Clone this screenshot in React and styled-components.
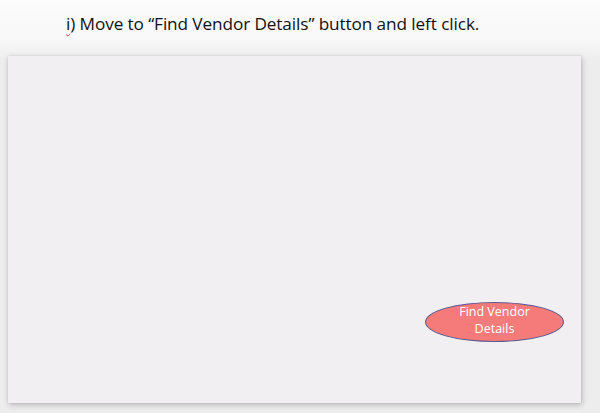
import styled, { createGlobalStyle } from "styled-components";

const Global = createGlobalStyle`
    html, body {
        margin: 0;
        padding: 0;
        background: #f6f5f6;
    }
    body {
        font-family: "Open Sans", "Liberation Sans", sans-serif;
        width: 600px;
        height: 413px;
        overflow: hidden;
    }
`;

const Page = styled.div`
    display: flex;
    flex-direction: column;
    padding: 11px 0 0 8px;
    background: linear-gradient(#fcfcfc 0px, #f8f8f8 40px, #ededed 60px, #ededed);
    height: 413px;
    box-sizing: border-box;
`;

const Title = styled.p`
    margin: 0 0 20px 58px;
    font-size: 17.2px;
    color: #111;
    line-height: 25px;
    letter-spacing: -0.1px;
`;

const Squiggle = styled.span`
    text-decoration: underline wavy #d33;
    text-decoration-thickness: 1px;
    text-underline-offset: 2px;
`;

const Slide = styled.div`
    width: 573px;
    height: 347px;
    background: #f1eff1;
    box-shadow: 1px 2px 6px rgba(0, 0, 0, 0.22), 0 0 2px rgba(0, 0, 0, 0.1);
    display: flex;
    align-items: flex-end;
    justify-content: flex-end;
    padding: 0 17px 61px 0;
    box-sizing: border-box;
`;

const Oval = styled.button`
    width: 139px;
    height: 40px;
    border-radius: 50%;
    background: #f47b7a;
    border: 1px solid #5b5b8e;
    color: #fff;
    font-family: "Open Sans", "Liberation Sans", sans-serif;
    font-size: 12.5px;
    line-height: 17px;
    padding: 0 0 5px;
    text-align: center;
`;

export default function App() {
    return (
        <>
            <Global />
            <Page>
                <Title>
                    <Squiggle>i</Squiggle>) Move to “Find Vendor Details” button and left click.
                </Title>
                <Slide>
                    <Oval>
                        Find Vendor
                        <br />
                        Details
                    </Oval>
                </Slide>
            </Page>
        </>
    );
}
